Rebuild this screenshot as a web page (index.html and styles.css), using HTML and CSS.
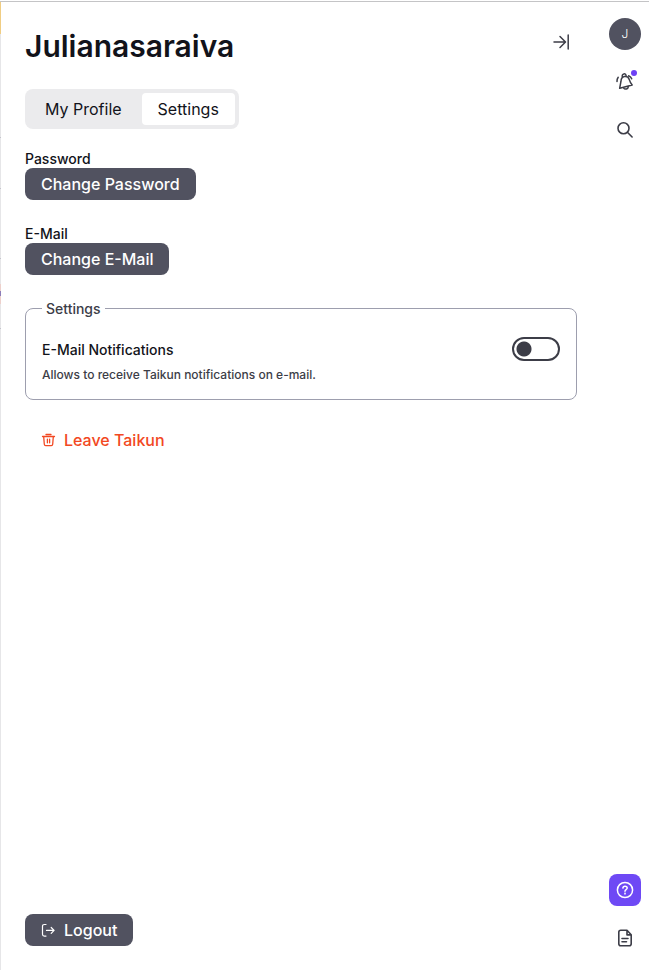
FILE: index.html
```html
<!DOCTYPE html>
<html lang="en">
<head>
<meta charset="utf-8">
<meta name="viewport" content="width=device-width, initial-scale=1">
<title>Profile settings</title>
<link rel="stylesheet" href="styles.css">
</head>
<body>
<div class="drawer">
  <main class="panel">
    <header class="panel-header">
      <h1 class="title">Julianasaraiva</h1>
      <button class="icon-button" type="button" aria-label="Close panel">
        <svg width="18" height="18" viewBox="0 0 18 18" fill="none" stroke="currentColor" stroke-width="1.500" stroke-linecap="round" stroke-linejoin="round"><path d="M2 9H12.500M8 3.500 13.500 9 8 14.500M16.200 2v14"/></svg>
      </button>
    </header>
    <div class="tabs" role="tablist">
      <button class="tab" type="button" role="tab" aria-selected="false">My Profile</button>
      <button class="tab tab-active" type="button" role="tab" aria-selected="true">Settings</button>
    </div>
    <section class="field">
      <h2 class="label">Password</h2>
      <button class="button" type="button">Change Password</button>
    </section>
    <section class="field">
      <h2 class="label">E-Mail</h2>
      <button class="button" type="button">Change E-Mail</button>
    </section>
    <fieldset class="group">
      <legend class="legend">Settings</legend>
      <div class="setting">
        <div>
          <label class="setting-name" for="email-notifications">E-Mail Notifications</label>
          <p class="setting-note" id="email-note">Allows to receive Taikun notifications on e-mail.</p>
        </div>
        <input class="switch" id="email-notifications" type="checkbox" role="switch" aria-describedby="email-note">
      </div>
    </fieldset>
    <button class="button button-danger" type="button">
      <svg width="16" height="16" viewBox="0 0 16 16" fill="none" stroke="currentColor" stroke-width="1.300" stroke-linecap="round" stroke-linejoin="round"><path d="M5 2.500h5M1.500 4.500h12M2.700 4.700l.6 7.600c.1.900.6 1.300 1.400 1.300h5.600c.8 0 1.300-.4 1.400-1.300l.6-7.600M6.400 7.200v3.600M8.600 7.200v3.600"/></svg>
      Leave Taikun
    </button>
    <button class="button button-logout" type="button">
      <svg width="16" height="16" viewBox="0 0 16 16" fill="none" stroke="currentColor" stroke-width="1.200" stroke-linecap="round" stroke-linejoin="round"><path d="M5 2.500H3.300Q1.500 2.500 1.500 4.300v8Q1.500 14.100 3.300 14.100H5M5.500 8.400H13M10.200 5.500 13.100 8.400l-2.900 2.900"/></svg>
      Logout
    </button>
  </main>
  <nav class="rail" aria-label="Tools">
    <button class="rail-button avatar" type="button" aria-label="Account">J</button>
    <button class="rail-button" type="button" aria-label="Notifications">
      <svg width="20" height="20" viewBox="0 0 20 20" fill="none" stroke="currentColor" stroke-width="1.500" stroke-linecap="round" stroke-linejoin="round"><path d="M4.700 16.200 6 9.200C6.100 6.400 7.500 5 9.300 4.600c2.500-.5 4.200.6 4.900 2.800.8 2.900 1.500 3.900 3 5.500L4.700 16.200ZM7.300 4.700c-.4-1.500.4-2.600 1.600-2.800 1.300-.2 2.100.6 2.300 2.200M8.500 15.800c1.400 2.200 4.600 1.500 5-1.300M2 9.500c-.1-1.800.2-2.900 1.200-4.200M13.600 3.800c1.700.7 2.600 1.700 3.100 3"/></svg>
      <span class="dot"></span>
    </button>
    <button class="rail-button" type="button" aria-label="Search">
      <svg width="18" height="18" viewBox="0 0 18 18" fill="none" stroke="currentColor" stroke-width="1.600" stroke-linecap="round"><circle cx="7.500" cy="7.300" r="5.500"/><path d="m11.600 11.500 4.500 4.500"/></svg>
    </button>
    <button class="rail-button help" type="button" aria-label="Help">
      <svg width="18" height="18" viewBox="0 0 18 18" fill="none" stroke="currentColor" stroke-width="1.500" stroke-linecap="round" stroke-linejoin="round"><circle cx="9" cy="9" r="7.600"/><path d="M6.900 7.100C7 5.800 7.800 5.200 9 5.200c1.300 0 2.200.7 2.200 1.900C11.200 8.600 9 8.700 9 10.200"/><circle cx="9" cy="12.600" r=".3"/></svg>
    </button>
    <button class="rail-button" type="button" aria-label="Documentation">
      <svg width="18" height="18" viewBox="0 0 18 18" fill="none" stroke="currentColor" stroke-width="1.600" stroke-linecap="round" stroke-linejoin="round"><path d="M11 1.300H4.800Q2.800 1.300 2.800 3.300v11.400q0 2 2 2h8.400q2 0 2-2V5.800L11 1.300ZM11 1.500v4.400h4.100M6 9.500h6M6 12.800h4.500"/></svg>
    </button>
  </nav>
</div>
</body>
</html>
```
FILE: styles.css
```css
* {
  box-sizing: border-box;
}

body {
  margin: 0;
  padding-top: 1px;
  background: #fff;
  color: #12131a;
  font-family: Inter, "Liberation Sans", sans-serif;
  font-size: 16px;
  line-height: 24px;
}

button {
  margin: 0;
  padding: 0;
  border: 0;
  background: none;
  color: inherit;
  font: inherit;
  cursor: pointer;
}

svg {
  display: block;
  flex: none;
}

/* The left edge shows a sliver of the page that lies under the drawer. */
.drawer {
  display: flex;
  min-height: calc(100vh - 1px);
  border-top: 1px solid #c4c4c6;
  background:
    linear-gradient(
      #f0cd83 32px, #e6e6e8 32px 135px,
      #c4c4cc 135px 136px, #e6e6e8 136px 186px,
      #c4c4cc 186px 187px, #e6e6e8 187px 256px,
      #c4c4cc 256px 257px, #e6e6e8 257px 282px,
      #edd0cb 282px 289px, #8c7db8 289px 294px,
      #edd0cb 294px 302px, #e6e6e8 302px 326px,
      #c4c4cc 326px 327px, #e6e6e8 327px
    ) left / 1px 100% no-repeat;
}

.panel {
  display: flex;
  flex: 1;
  flex-direction: column;
  align-items: flex-start;
  min-width: 0;
  padding: 24px 24px 24px 25px;
}

.panel-header {
  display: flex;
  align-items: flex-start;
  justify-content: space-between;
  width: 100%;
  margin-bottom: 23px;
}

.title {
  margin: 0;
  font-size: 30px;
  font-weight: 600;
  line-height: 40px;
}

.icon-button {
  display: grid;
  place-items: center;
  width: 32px;
  height: 32px;
  color: #3c3d47;
}

.tabs {
  display: flex;
  gap: 4px;
  margin-bottom: 21px;
  padding: 4px;
  border-radius: 8px;
  background: #ebebed;
}

.tab {
  height: 32px;
  padding: 0 16px;
  border-radius: 4px;
}

.tab-active {
  background: #fff;
}

.field {
  margin-bottom: 25px;
}

.label {
  margin: 0;
  font-size: 14px;
  font-weight: 500;
  line-height: 18px;
}

.button {
  display: flex;
  align-items: center;
  gap: 7px;
  height: 32px;
  padding: 0 16px;
  border-radius: 8px;
  background: #515260;
  color: #fff;
  font-weight: 500;
}

.group {
  width: 100%;
  min-width: 0;
  margin: 0 0 24px;
  padding: 16px 16px 12px;
  border: 1px solid #9d9eae;
  border-radius: 8px;
}

.legend {
  padding: 0 4px;
  color: #3c3d47;
  font-size: 14px;
  font-weight: 500;
  line-height: 17px;
}

.setting {
  display: flex;
  align-items: flex-start;
  justify-content: space-between;
  padding-top: 4px;
}

.setting-name {
  display: block;
  font-size: 14px;
  font-weight: 500;
  line-height: 26px;
}

.setting-note {
  margin: 0;
  color: #3c3d47;
  font-size: 12px;
  font-weight: 500;
  line-height: 24px;
}

.switch {
  flex: none;
  width: 48px;
  height: 24px;
  margin: 0;
  border: 2px solid #3c3d47;
  border-radius: 12px;
  background: radial-gradient(circle at 10px 10px, #3c3d47 7px, #fff 8px);
  appearance: none;
}

.switch:checked {
  background: radial-gradient(circle at 34px 10px, #3c3d47 7px, #fff 8px);
}

.button-danger {
  background: none;
  color: #f24822;
}

.button-logout {
  margin-top: auto;
}

.rail {
  display: flex;
  flex: none;
  flex-direction: column;
  gap: 16px;
  width: 48px;
  padding: 16px 8px;
}

.rail-button {
  position: relative;
  display: grid;
  place-items: center;
  width: 32px;
  height: 32px;
  color: #3c3d47;
}

.avatar {
  border-radius: 50%;
  background: #515260;
  color: #fff;
  font-size: 12px;
  font-weight: 300;
}

.dot {
  position: absolute;
  top: 4px;
  right: 4px;
  width: 6px;
  height: 6px;
  border-radius: 50%;
  background: #6e41f5;
}

.help {
  margin-top: auto;
  border-radius: 8px;
  background: #6e49f5;
  color: #fff;
}
```
